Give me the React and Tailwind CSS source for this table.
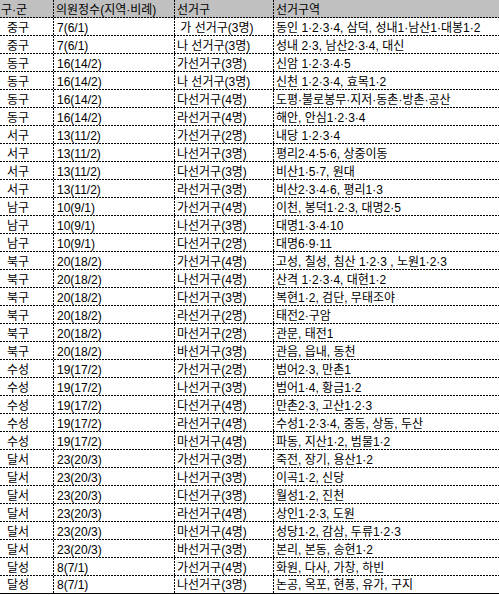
const rows = [
  ["중구", "7(6/1)", " 가 선거구(3명)", "동인 1·2·3·4, 삼덕, 성내1·남산1·대봉1·2"],
  ["중구", "7(6/1)", "나 선거구(3명)", "성내 2·3, 남산2·3·4, 대신"],
  ["동구", "16(14/2)", "가선거구(3명)", "신암 1·2·3·4·5"],
  ["동구", "16(14/2)", "나 선거구(3명)", "신천 1·2·3·4, 효목1·2"],
  ["동구", "16(14/2)", "다선거구(4명)", "도평·불로봉무·지저·동촌·방촌·공산"],
  ["동구", "16(14/2)", "라선거구(4명)", "해안, 안심1·2·3·4"],
  ["서구", "13(11/2)", "가선거구(2명)", "내당 1·2·3·4"],
  ["서구", "13(11/2)", "나선거구(3명)", "평리2·4·5·6, 상중이동"],
  ["서구", "13(11/2)", "다선거구(3명)", "비산1·5·7, 원대"],
  ["서구", "13(11/2)", "라선거구(3명)", "비산2·3·4·6, 평리1·3"],
  ["남구", "10(9/1)", "가선거구(4명)", "이천, 봉덕1·2·3, 대명2·5"],
  ["남구", "10(9/1)", "나선거구(3명)", "대명1·3·4·10"],
  ["남구", "10(9/1)", "다선거구(2명)", "대명6·9·11"],
  ["북구", "20(18/2)", "가선거구(4명)", "고성, 칠성, 침산 1·2·3 , 노원1·2·3"],
  ["북구", "20(18/2)", "나선거구(4명)", "산격 1·2·3·4, 대현1·2"],
  ["북구", "20(18/2)", "다선거구(3명)", "복현1·2, 검단, 무태조야"],
  ["북구", "20(18/2)", "라선거구(2명)", "태전2·구암"],
  ["북구", "20(18/2)", "마선거구(2명)", "관문, 태전1"],
  ["북구", "20(18/2)", "바선거구(3명)", "관음, 읍내, 동천"],
  ["수성", "19(17/2)", "가선거구(2명)", "범어2·3, 만촌1"],
  ["수성", "19(17/2)", "나선거구(3명)", "범어1·4, 황금1·2"],
  ["수성", "19(17/2)", "다선거구(4명)", "만촌2·3, 고산1·2·3"],
  ["수성", "19(17/2)", "라선거구(4명)", "수성1·2·3·4, 중동, 상동, 두산"],
  ["수성", "19(17/2)", "마선거구(4명)", "파동, 지산1·2, 범물1·2"],
  ["달서", "23(20/3)", "가선거구(3명)", "죽전, 장기, 용산1·2"],
  ["달서", "23(20/3)", "나선거구(3명)", "이곡1·2, 신당"],
  ["달서", "23(20/3)", "다선거구(3명)", "월성1·2, 진천"],
  ["달서", "23(20/3)", "라선거구(4명)", "상인1·2·3, 도원"],
  ["달서", "23(20/3)", "마선거구(4명)", "성당1·2, 감삼, 두류1·2·3"],
  ["달서", "23(20/3)", "바선거구(3명)", "본리, 본동, 송현1·2"],
  ["달성", "8(7/1)", "가선거구(4명)", "화원, 다사, 가창, 하빈"],
  ["달성", "8(7/1)", "나선거구(3명)", "논공, 옥포, 현풍, 유가, 구지"],
];

const rowLine =
  "[background:repeating-linear-gradient(90deg,#000_0_2px,transparent_2px_3px)_left_bottom/100%_1px_no-repeat]";
const cellLine =
  "[background:repeating-linear-gradient(180deg,#000_0_2px,transparent_2px_3px)_right_top/1px_100%_no-repeat]";

function Cell({ children, className = "", line = true }) {
  return (
    <div
      className={`flex items-end overflow-hidden whitespace-pre pb-[1px] leading-[14px] ${
        line ? cellLine : ""
      } ${className}`}
    >
      {children}
    </div>
  );
}

export default function App() {
  return (
    <div
      className="w-[499px] h-[595px] bg-white text-black text-[12px] overflow-hidden"
      style={{ fontFamily: '"Liberation Sans", "Noto Sans CJK KR", sans-serif' }}
    >
      <div className="bg-[#c0c0c0]">
        <div className={`grid grid-cols-[54px_121px_99px_1fr] h-[18px] ${rowLine}`}>
          <Cell className="pl-[1px]">구·군</Cell>
          <Cell className="pl-[2px]">의원정수(지역·비례)</Cell>
          <Cell className="pl-[2px]">선거구</Cell>
          <Cell className="pl-[2px]" line={false}>선거구역</Cell>
        </div>
      </div>
      {rows.map((r, i) => {
        const last = i === rows.length - 1;
        return (
          <div
            key={i}
            className={`grid grid-cols-[54px_121px_99px_1fr] h-[18px] ${
              last ? "border-b border-black" : rowLine
            }`}
          >
            <Cell className="pl-[7px]">{r[0]}</Cell>
            <Cell className="pl-[3px]">{r[1]}</Cell>
            <Cell className="pl-[2px]">{r[2]}</Cell>
            <Cell className="pl-[2px]" line={false}>{r[3]}</Cell>
          </div>
        );
      })}
    </div>
  );
}
